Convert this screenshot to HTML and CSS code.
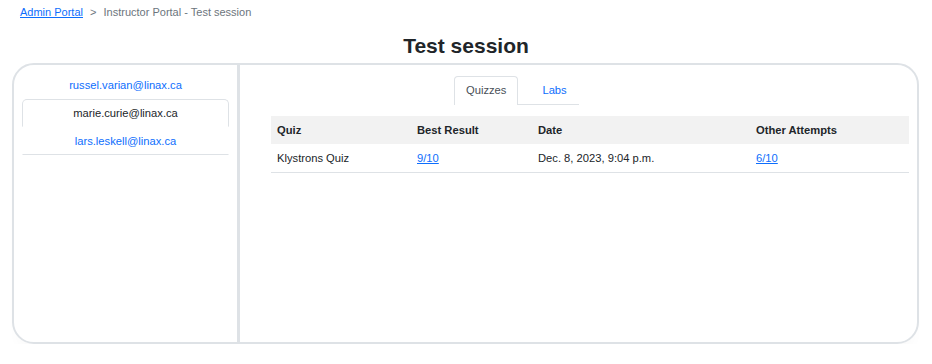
FILE: index.html
```html
<!DOCTYPE html>
<html lang="en">
<head>
    <meta charset="UTF-8">
    <meta name="viewport" content="width=device-width, initial-scale=1.0">
    <title>Instructor Portal - Test session</title>
    <link rel="stylesheet" href="styles.css">
</head>
<body>
    <div class="breadcrumb">
        <a href="#">Admin Portal</a>
        <span class="sep">&gt;</span>
        <span>Instructor Portal - Test session</span>
    </div>

    <h1>Test session</h1>

    <div class="panel">
        <!-- student list -->
        <div class="students">
            <a href="#" class="student">russel.varian@linax.ca</a>
            <a href="#" class="student active">marie.curie@linax.ca</a>
            <a href="#" class="student last">lars.leskell@linax.ca</a>
        </div>

        <div class="results">
            <div class="tabs">
                <a href="#" class="tab active">Quizzes</a>
                <a href="#" class="tab">Labs</a>
            </div>

            <table class="result-table">
                <thead>
                    <tr>
                        <th class="col-quiz">Quiz</th>
                        <th class="col-best">Best Result</th>
                        <th class="col-date">Date</th>
                        <th>Other Attempts</th>
                    </tr>
                </thead>
                <tbody>
                    <tr>
                        <td>Klystrons Quiz</td>
                        <td><a href="#">9/10</a></td>
                        <td>Dec. 8, 2023, 9:04 p.m.</td>
                        <td><a href="#">6/10</a></td>
                    </tr>
                </tbody>
            </table>
        </div>
    </div>
</body>
</html>
```

FILE: styles.css
```css
body {
    font-family: "Liberation Sans", Arial, sans-serif;
    font-size: 11.2px;
    color: #212529;
    background-color: #ffffff;
    margin: 0;
    padding: 0;
}
a {
    color: #0d6efd;
}
.breadcrumb {
    padding: 4px 20px 0 20px;
    height: 20px;
    line-height: 16px;
    font-size: 11px;
    color: #6c757d;
}
.breadcrumb .sep {
    margin: 0 4px;
}
h1 {
    text-align: center;
    font-size: 21px;
    line-height: 26px;
    margin: 9px 0 4px 0;
    color: #212529;
}
.panel {
    display: flex;
    height: 281px;
    margin: 0 13px 0 12px;
    border: 2px solid #dee2e6;
    border-radius: 22px;
    box-sizing: border-box;
    box-shadow: 0 14px 14px -6px rgba(0, 0, 0, 0.025);
}
.students {
    width: 223px;
    padding: 6px 8px;
    box-sizing: border-box;
    display: flex;
    flex-direction: column;
}
.student {
    display: block;
    height: 28px;
    line-height: 26px;
    text-align: center;
    text-decoration: none;
    border: 1px solid transparent;
    box-sizing: border-box;
}
.student.active {
    color: #212529;
    border-color: #dee2e6;
    border-bottom-color: transparent;
    border-radius: 5px 5px 0 0;
}
.student.last {
    border-bottom-color: #dee2e6;
}
.results {
    flex: 1;
    border-left: 3px solid #dee2e6;
    padding: 11px 8px 0 31px;
}
.tabs {
    display: flex;
    gap: 12px;
    width: fit-content;
    margin-left: 183px;
    border-bottom: 1px solid #dee2e6;
}
.tab {
    display: block;
    height: 28px;
    line-height: 27px;
    padding: 0 11px;
    text-decoration: none;
    border: 1px solid transparent;
    border-bottom: none;
    border-radius: 4px 4px 0 0;
    margin-bottom: -1px;
    box-sizing: border-box;
}
.tab.active {
    color: #495057;
    background-color: #ffffff;
    border-color: #dee2e6;
    height: 29px;
}
.result-table {
    width: 100%;
    margin-top: 11px;
    border-collapse: collapse;
}
.result-table th {
    background-color: #f2f2f2;
    text-align: left;
    font-weight: bold;
    height: 28px;
    padding: 0 6px;
}
.result-table td {
    height: 28px;
    padding: 0 6px;
    border-bottom: 1px solid #dee2e6;
}
.col-quiz {
    width: 128px;
}
.col-best {
    width: 109px;
}
.col-date {
    width: 206px;
}
```
